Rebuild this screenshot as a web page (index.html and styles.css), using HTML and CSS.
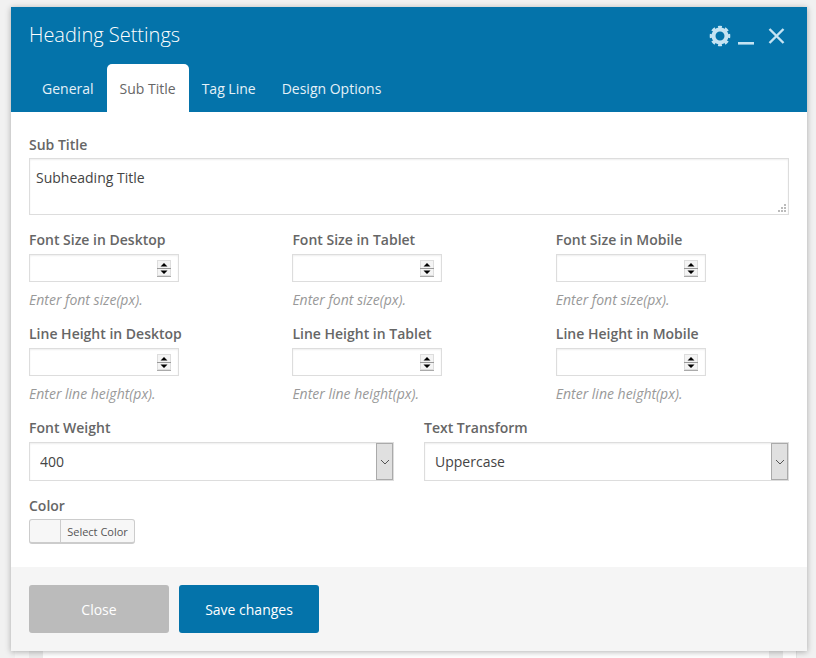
FILE: index.html
```html
<!DOCTYPE html>
<html lang="en">

<head>
  <meta charset="UTF-8">
  <meta name="viewport" content="width=device-width, initial-scale=1.0">
  <title>Heading Settings</title>
  <link rel="stylesheet" href="styles.css">
</head>

<body>
  <div class="modal">
    <div class="modal-header">
      <div class="title-row">
        <h2>Heading Settings</h2>
        <div class="header-icons">
          <svg class="icon-gear" width="22" height="22" viewBox="0 0 22 22">
            <circle class="gear-ring" cx="11" cy="11" r="6.500" />
            <circle class="gear-teeth" cx="11" cy="11" r="8.800" pathLength="80" />
          </svg>
          <svg class="icon-min" width="16" height="3" viewBox="0 0 16 3">
            <rect width="16" height="2.600" />
          </svg>
          <svg class="icon-close" width="18" height="18" viewBox="0 0 18 18">
            <path d="M1.500 2l14 14M15.500 2l-14 14" />
          </svg>
        </div>
      </div>
      <ul class="tabs">
        <li>General</li>
        <li class="active">Sub Title</li>
        <li>Tag Line</li>
        <li>Design Options</li>
      </ul>
    </div>

    <div class="modal-body">
      <label class="field-label">Sub Title</label>
      <textarea class="title-box">Subheading Title</textarea>

      <div class="num-grid first">
        <div>
          <label class="field-label">Font Size in Desktop</label>
          <input type="number" class="num-input">
          <p class="hint">Enter font size(px).</p>
        </div>
        <div>
          <label class="field-label">Font Size in Tablet</label>
          <input type="number" class="num-input">
          <p class="hint">Enter font size(px).</p>
        </div>
        <div>
          <label class="field-label">Font Size in Mobile</label>
          <input type="number" class="num-input">
          <p class="hint">Enter font size(px).</p>
        </div>
      </div>

      <div class="num-grid">
        <div>
          <label class="field-label">Line Height in Desktop</label>
          <input type="number" class="num-input">
          <p class="hint">Enter line height(px).</p>
        </div>
        <div>
          <label class="field-label">Line Height in Tablet</label>
          <input type="number" class="num-input">
          <p class="hint">Enter line height(px).</p>
        </div>
        <div>
          <label class="field-label">Line Height in Mobile</label>
          <input type="number" class="num-input">
          <p class="hint">Enter line height(px).</p>
        </div>
      </div>

      <div class="select-grid">
        <div>
          <label class="field-label">Font Weight</label>
          <div class="select-wrap">
            <select>
              <option>400</option>
            </select>
            <span class="select-arrow">
              <svg width="10" height="6" viewBox="0 0 10 6"><path d="M1 1l4 4 4-4" /></svg>
            </span>
          </div>
        </div>
        <div>
          <label class="field-label">Text Transform</label>
          <div class="select-wrap">
            <select>
              <option>Uppercase</option>
            </select>
            <span class="select-arrow">
              <svg width="10" height="6" viewBox="0 0 10 6"><path d="M1 1l4 4 4-4" /></svg>
            </span>
          </div>
        </div>
      </div>

      <label class="field-label color-label">Color</label>
      <button type="button" class="color-btn">
        <span class="swatch"></span>
        <span class="color-text">Select Color</span>
      </button>
    </div>

    <div class="modal-footer">
      <button type="button" class="btn btn-close">Close</button>
      <button type="button" class="btn btn-save">Save changes</button>
    </div>
  </div>

  <div class="behind">
    <div class="behind-bar"></div>
    <div class="behind-panel"></div>
    <div class="behind-bar"></div>
    <div class="behind-end"></div>
  </div>
</body>

</html>
```

FILE: styles.css
```css
* {
  box-sizing: border-box;
}

html,
body {
  height: 658px;
  overflow: hidden;
}

body {
  font-family: "Open Sans", Arial, sans-serif;
  margin: 0;
  padding: 7px 0 0 11px;
  background-color: #f1f1f1;
  color: #555;
}

.modal {
  width: 796px;
  height: 644px;
  background: #fff;
  box-shadow: 0 1px 6px rgba(0, 0, 0, 0.3);
  display: flex;
  flex-direction: column;
  position: relative;
}

.modal-header {
  background: #0473aa;
  height: 105px;
  display: flex;
  flex-direction: column;
  justify-content: space-between;
  flex-shrink: 0;
}

.title-row {
  display: flex;
  justify-content: space-between;
  padding: 14px 21px 0 18px;
}

h2 {
  margin: 0;
  font-size: 20px;
  font-weight: 300;
  line-height: 27px;
  color: #fff;
}

.header-icons {
  display: flex;
  align-items: flex-start;
}

.header-icons svg {
  display: block;
}

.icon-gear {
  margin-top: 4px;
}

.gear-ring {
  fill: none;
  stroke: #c5e3f2;
  stroke-width: 4;
}

/* 8 teeth: pathLength 80, so one tooth + gap = 10 */
.gear-teeth {
  fill: none;
  stroke: #c5e3f2;
  stroke-width: 3;
  stroke-dasharray: 5.500 4.500;
  stroke-dashoffset: 2.750;
}

.icon-min {
  fill: #c5e3f2;
  margin: 21px 14px 0 7px;
}

.icon-close {
  fill: none;
  stroke: #c5e3f2;
  stroke-width: 2.400;
  margin-top: 6px;
}

.tabs {
  list-style: none;
  margin: 0;
  padding: 0 0 0 18px;
  display: flex;
}

.tabs li {
  height: 48px;
  padding: 15px 13px 0;
  font-size: 14px;
  line-height: 19px;
  color: #e4f1f8;
}

.tabs .active {
  background: #fff;
  color: #666;
  border-radius: 5px 5px 0 0;
}

.modal-body {
  flex: 1;
  padding: 23px 18px 0;
}

.field-label {
  display: block;
  font-size: 14px;
  font-weight: 600;
  line-height: 19px;
  color: #666;
}

.title-box {
  display: block;
  width: 760px;
  height: 57px;
  margin-top: 4px;
  padding: 8px 6px;
  border: 1px solid #ddd;
  box-shadow: inset 0 1px 2px rgba(0, 0, 0, 0.07);
  font-family: inherit;
  font-size: 14px;
  line-height: 21px;
  color: #444;
  outline: none;
}

.title-box::-webkit-resizer {
  background: url("data:image/svg+xml,%3Csvg xmlns='http://www.w3.org/2000/svg' width='15' height='15' fill='%23bbb'%3E%3Crect x='11' y='5' width='2' height='2'/%3E%3Crect x='8' y='8' width='2' height='2'/%3E%3Crect x='11' y='8' width='2' height='2'/%3E%3Crect x='5' y='11' width='2' height='2'/%3E%3Crect x='8' y='11' width='2' height='2'/%3E%3Crect x='11' y='11' width='2' height='2'/%3E%3C/svg%3E") no-repeat;
}

.num-grid {
  display: grid;
  grid-template-columns: repeat(3, 263.400px);
  margin-top: 10px;
  height: 84px;
}

.num-grid.first {
  margin-top: 15px;
}

.num-input {
  display: block;
  width: 150px;
  height: 28px;
  margin-top: 5px;
  padding: 0 7px 0 7px;
  border: 1px solid #ddd;
  box-shadow: inset 0 1px 2px rgba(0, 0, 0, 0.07);
  background: #fff;
  outline: none;
}

.num-input::-webkit-inner-spin-button {
  -webkit-appearance: none;
  appearance: none;
  opacity: 1;
  width: 14px;
  height: 17px;
  margin-right: 0;
  background: url("data:image/svg+xml,%3Csvg xmlns='http://www.w3.org/2000/svg' width='14' height='17'%3E%3Crect width='14' height='17' fill='%23ddd'/%3E%3Crect x='1' y='1' width='12' height='7' fill='%23f4f4f4'/%3E%3Crect x='1' y='9' width='12' height='6' fill='%23f4f4f4'/%3E%3Crect y='8' width='14' height='1' fill='%23999'/%3E%3Crect y='16' width='14' height='1' fill='%23aaa'/%3E%3Cpath d='M7 3l3.500 3.500h-7zM3.500 10.500h7L7 14z'/%3E%3C/svg%3E") no-repeat;
}

.hint {
  margin: 8px 0 0;
  font-size: 14px;
  font-style: italic;
  line-height: 19px;
  color: #999;
}

.select-grid {
  display: grid;
  grid-template-columns: 365px 365px;
  column-gap: 30px;
  margin-top: 10px;
}

.select-wrap {
  position: relative;
  height: 39px;
  margin-top: 5px;
}

.select-wrap select {
  display: block;
  appearance: none;
  width: 100%;
  height: 39px;
  padding: 0 10px;
  border: 1px solid #ddd;
  border-radius: 0;
  box-shadow: inset 0 1px 2px rgba(0, 0, 0, 0.07);
  background: #fff;
  font-family: inherit;
  font-size: 14px;
  color: #444;
}

.select-arrow {
  position: absolute;
  top: 1px;
  right: 1px;
  width: 17px;
  height: 37px;
  background: #e0e0e0;
  border: 1px solid #aaa;
  display: flex;
  align-items: center;
  justify-content: center;
}

.select-arrow svg {
  fill: none;
  stroke: #555;
  stroke-width: 1;
}

.color-label {
  margin-top: 15px;
}

.color-btn {
  display: flex;
  width: 106px;
  height: 25px;
  margin-top: 4px;
  padding: 0;
  background: #f7f7f7;
  border: 1px solid #ccc;
  border-bottom-width: 2px;
  border-radius: 3px;
  font-family: inherit;
}

.swatch {
  width: 31px;
  height: 100%;
  border-right: 1px solid #ccc;
}

.color-text {
  flex: 1;
  font-size: 11px;
  line-height: 23px;
  color: #555;
  text-align: center;
}

.modal-footer {
  height: 84px;
  flex-shrink: 0;
  background: #f5f5f5;
  padding: 18px 18px 0;
  display: flex;
  gap: 10px;
}

.btn {
  width: 140px;
  height: 48px;
  border: none;
  border-radius: 3px;
  font-family: inherit;
  font-size: 14px;
  color: #fff;
}

.btn-close {
  background: #bbb;
}

.btn-save {
  background: #0473aa;
}

/* page behind the modal */
.behind {
  display: flex;
  height: 8px;
  width: 782px;
  margin-left: 4px;
  padding-left: 14px;
  background: #f7f7f7;
}

.behind-bar {
  width: 14px;
  background: #ececec;
}

.behind-panel {
  flex: 1;
  background: #fff;
}

.behind-end {
  width: 14px;
  background: #fff;
  border-right: 1px solid #e5e5e5;
}
```
